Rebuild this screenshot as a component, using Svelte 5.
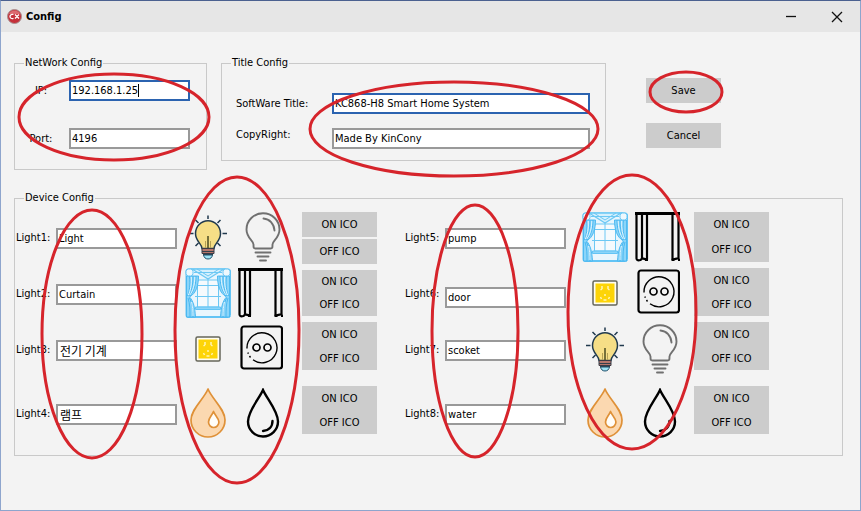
<script>
  let network = $state({ ip: '192.168.1.25', port: '4196' });
  let titles = $state({ software: 'KC868-H8 Smart Home System', copyright: 'Made By KinCony' });

  let banks = $state([
    {
      side: 'left',
      rows: [
        { id: 1, name: 'Light', icon: 'bulb' },
        { id: 2, name: 'Curtain', icon: 'curtain' },
        { id: 3, name: '전기 기계', icon: 'socket', korean: true },
        { id: 4, name: '램프', icon: 'drop', korean: true }
      ]
    },
    {
      side: 'right',
      rows: [
        { id: 5, name: 'pump', icon: 'curtain' },
        { id: 6, name: 'door', icon: 'socket' },
        { id: 7, name: 'scoket', icon: 'bulb' },
        { id: 8, name: 'water', icon: 'drop' }
      ]
    }
  ]);

  // Red marker rings: centre x, centre y, radius x, radius y
  const rings = [
    [114, 117, 95, 43],
    [454, 129, 144, 47],
    [686, 92, 36, 20],
    [92, 334, 50, 124],
    [237, 330, 62, 153],
    [475, 331, 43, 126],
    [632, 312, 64, 137]
  ];
</script>

{#snippet iconOn(kind)}
  <svg class="on" viewBox="0 0 46 50" width="46" height="50" aria-hidden="true">
    {#if kind === 'bulb'}
      <g fill="none" stroke="#20394d" stroke-width="1.5">
        <path d="M23 3.5v3.5M4 21.5h4.5M37.5 21.5H42M10.5 8l3 3M35.5 8l-3 3M10.5 34l3-3M35.5 34l-3-3" />
        <path fill="#f6de86" d="M17 36.5c0-5-6.5-7-6.500-15a12.500 12.800 0 0 1 25 0c0 8-6.500 10-6.500 15z" />
        <path stroke="#4b4b20" d="M23 24v12" />
        <path stroke="#b5a055" stroke-width="1" d="M20.500 29v7M25.500 29v7" />
      </g>
      <path fill="#b5766c" stroke="#3b3b45" d="M17 36.500h12v5H17z" />
      <path stroke="#33404c" stroke-width="1" d="M17 39.500h12M18 42.500h10" />
      <path fill="#9fe3f5" stroke="#20506b" d="M18.500 43h9c-.5 2.500-2 4-4.500 4s-4-1.500-4.500-4z" />
    {:else if kind === 'curtain'}
      <rect x="1" y="1" width="44.500" height="48.500" rx="2" fill="#e9f6fd" stroke="#62c4f5" />
      <g fill="none" stroke="#6cc8f4" stroke-width="1">
        <path fill="#f5fafd" d="M12.500 12h21v27h-21z" />
        <path d="M23 11v28M10 17.500h26M10 28.500h26" />
        <path fill="#d5f0fd" stroke-width="1.300" d="M7 1h32L23 11z" />
        <path d="M9 4.500h28M12 1l11 7 11-7" />
      </g>
      <g fill="#8bd5f9" stroke="#43b4ef" stroke-width=".9">
        <path d="M1.500 8h12c0 9-2 17-9 21 4 4 5.500 11 6 20h-9z" />
        <path d="M44.500 8h-12c0 9 2 17 9 21-4 4-5.500 11-6 20h9z" />
        <path fill="none" d="M4.500 8c1 9 0 15-2 20M8 8c0 10-2 16-4 20M11 8c0 8-2 15-6 20M3 30c2 6 2 12 2 19M4.500 30c3 6 3.500 12 3.500 19M41.500 8c-1 9 0 15 2 20M38 8c0 10 2 16 4 20M35 8c0 8 2 15 6 20M43 30c-2 6-2 12-2 19M41.500 30c-3 6-3.500 12-3.500 19" />
        <path stroke="#eaf8ff" fill="none" d="M6.300 9c.5 8-1 14-3 18M9.800 9c0 8-2 14-5 18M39.700 9c-.5 8 1 14 3 18M36.200 9c0 8 2 14 5 18M6.500 34c1 4 1.500 9 1.500 14M39.500 34c-1 4-1.500 9-1.500 14" />
      </g>
      <g fill="#eef8fd" stroke="#62c4f5">
        <rect x="1" y="1" width="7" height="7" rx="2.500" />
        <rect x="38" y="1" width="7" height="7" rx="2.500" />
        <path d="M10.500 39h25v2.500h-25z" fill="#8bd5f9" />
        <path d="M11 48.500h24" />
      </g>
    {:else if kind === 'socket'}
      <rect x="11" y="13" width="24" height="24" rx="1.500" fill="#fffdf0" stroke="#66665a" stroke-width="1.500" />
      <rect x="13.500" y="15.500" width="19" height="19" fill="#fdd407" />
      <path fill="none" stroke="#fff3b5" stroke-width="1.500" d="M20 18v3M26 18v3M18.500 22l1.500-1M27.500 22l-1.500-1M23 26v2M18.500 29l1 2M27.500 29l-1 2M21.500 32h3" />
    {:else}
      <g stroke="#df9138" stroke-width="1.700" stroke-linejoin="round">
        <path fill="#fbd8b0" d="M23 1C19 11 6 21 6 32a17 17 0 0 0 34 0C40 21 27 11 23 1z" />
        <path fill="#fffdf8" d="M28.500 23.500c-1.500 4-5 6.500-5 10.500a5.200 5.500 0 0 0 10.400 0c0-4-3.900-6.500-5.400-10.500z" />
      </g>
    {/if}
  </svg>
{/snippet}

{#snippet iconOff(kind)}
  <svg class="off" viewBox="0 0 45 50" width="45" height="50" aria-hidden="true">
    {#if kind === 'bulb'}
      <g fill="none" stroke="#707070" stroke-width="1.900" stroke-linecap="round">
        <path d="M17.500 36.500c-2 0-2-1-2-4 0-4-7-6.500-7-15a16.500 16.200 0 0 1 33 0c0 8.500-7 11-7 15 0 3 0 4-2 4z" />
        <path d="M25.500 6.500c6 .5 10.500 5 11 12" />
        <path d="M17.500 40.500h15M19.500 44.500h11M22 48.500h6" />
      </g>
    {:else if kind === 'curtain'}
      <g fill="none" stroke="#000" stroke-width="2.200">
        <path d="M0 1.500h45" stroke-width="2.800" />
        <path d="M1.500 1v45.500c0 2 2 2 4 1.500l1.500-1.500V1M7 46.500c1.500-.5 3.500 1.500 5 .5V1M37.500 1v46c2 1 3.500-1 6-.5V1" />
        <path d="M10 47.800h3M36.500 47.800h3M43 47.800h2" />
      </g>
    {:else if kind === 'socket'}
      <rect x="3.500" y="2.500" width="40.500" height="42" rx="2.500" fill="none" stroke="#000" stroke-width="2.200" />
      <g fill="none" stroke="#000" stroke-width="1.400">
        <path d="M9 24.500a15 15 0 1 1 6 11.300M12.500 33.500l-1-1.500M10.300 29.800l-.4-1.300" />
        <circle cx="18.500" cy="23.500" r="3.500" stroke-width="1.700" />
        <circle cx="29.500" cy="23.500" r="3.500" stroke-width="1.700" />
      </g>
    {:else}
      <g fill="none" stroke="#000" stroke-width="2.400" stroke-linecap="round">
        <path d="M25 2C21 11 10 23 10 33.500a15 15 0 0 0 30 0C40 23 29 11 25 2z" />
        <path d="M34.500 33c0 6-4 9.500-9.500 10" />
      </g>
    {/if}
  </svg>
{/snippet}

<div class="window">
  <header>
    <svg width="15" height="15" viewBox="0 0 15 15" aria-hidden="true">
      <circle cx="7.500" cy="7.500" r="7" fill="#c5303a" stroke="#a89090" />
      <path d="M2 5a6 6 0 0 1 11 0z" fill="#dc6a70" />
      <path d="M6.500 5.500C4.500 4.800 3 6 3 7.500s1.500 2.500 3.500 1.800M8 5.500l4 4M12 5.500l-4 4" fill="none" stroke="#fff" stroke-width="1.300" />
    </svg>
    <h1>Config</h1>
    <button class="chrome" aria-label="Minimize">
      <svg width="12" height="12" viewBox="0 0 12 12"><path d="M1 5.500h10" /></svg>
    </button>
    <button class="chrome" aria-label="Close">
      <svg width="12" height="12" viewBox="0 0 12 12"><path d="M1 1l10 10M11 1L1 11" /></svg>
    </button>
  </header>

  <main>
    <div class="top">
      <fieldset>
        <legend>NetWork Config</legend>
        <div class="form network">
          <label for="ip">IP:</label>
          <div class="field">
            <input id="ip" class="active" bind:value={network.ip} />
            <span class="caret"></span>
          </div>
          <label for="port">Port:</label>
          <input id="port" bind:value={network.port} />
        </div>
      </fieldset>

      <fieldset>
        <legend>Title Config</legend>
        <div class="form titles">
          <label for="software">SoftWare Title:</label>
          <input id="software" class="active" bind:value={titles.software} />
          <label for="copyright" class="raised">CopyRight:</label>
          <input id="copyright" bind:value={titles.copyright} />
        </div>
      </fieldset>

      <div class="actions">
        <button>Save</button>
        <button>Cancel</button>
      </div>
    </div>

    <fieldset class="devices">
      <legend>Device Config</legend>
      {#each banks as bank}
        <div class="bank {bank.side}">
          {#each bank.rows as row}
            <div class="row">
              <label for="light{row.id}">Light{row.id}:</label>
              <input id="light{row.id}" class:korean={row.korean} bind:value={row.name} />
              {@render iconOn(row.icon)}
              {@render iconOff(row.icon)}
              <div class="pair">
                <button>ON ICO</button>
                <button>OFF ICO</button>
              </div>
            </div>
          {/each}
        </div>
      {/each}
    </fieldset>
  </main>

  <svg class="rings" aria-hidden="true">
    {#each rings as [cx, cy, rx, ry]}
      <ellipse {cx} {cy} {rx} {ry} />
    {/each}
  </svg>
</div>

<style>
  .window {
    position: relative;
    box-sizing: border-box;
    min-height: 100vh;
    border: 1px solid #8ea5cd;
    border-top-color: #4b6190;
    background: #f3f3f3;
    color: #000;
    font: 11px/14px 'DejaVu Sans Condensed', 'Noto Sans CJK KR', sans-serif;
  }

  header {
    display: flex;
    align-items: center;
    height: 31px;
    padding-left: 6px;
    background: #e6e6e6;
  }

  h1 {
    flex: 1;
    margin: 0 0 0 4px;
    font-size: 11px;
    line-height: 14px;
  }

  .chrome {
    display: grid;
    place-items: center;
    width: 46px;
    height: 31px;
    background: none;
  }

  .chrome path {
    fill: none;
    stroke: #111;
    stroke-width: 1.3;
  }

  main {
    padding: 24px 17px 24px 13px;
  }

  fieldset {
    box-sizing: border-box;
    min-width: 0;
    margin: 0;
    padding: 0;
    border: 1px solid #c9c9c9;
  }

  legend {
    margin-left: 9px;
    padding: 0 1px;
  }

  button {
    padding: 0;
    border: 0;
    background: #ccc;
    color: inherit;
    font: inherit;
  }

  input {
    box-sizing: border-box;
    width: 100%;
    min-width: 0;
    height: 21px;
    padding: 0 1px;
    border: 2px solid #999;
    border-radius: 0;
    outline: 0;
    background: #fff;
    color: inherit;
    font: inherit;
  }

  input.active {
    border-color: #2b63b0;
  }

  input.korean {
    padding: 0 2px 1px;
    font: 12px/14px 'Noto Sans CJK KR', sans-serif;
  }

  .top {
    display: grid;
    grid-template-columns: 193fr 385fr 223fr;
    align-items: start;
    column-gap: 14px;
    height: 135px;
  }

  .form {
    display: grid;
    align-items: center;
  }

  .network {
    grid-template-columns: 28px 1fr;
    gap: 27px 14px;
    padding: 10px 16px 20px 12px;
  }

  .network label {
    text-align: center;
  }

  .field {
    position: relative;
  }

  .caret {
    position: absolute;
    left: 69px;
    top: 4px;
    width: 1px;
    height: 13px;
    background: #000;
  }

  .titles {
    grid-template-columns: 82px 1fr;
    gap: 14px;
    padding: 23px 15px 11px 14px;
  }

  .raised {
    align-self: start;
  }

  .actions {
    display: flex;
    flex-direction: column;
    gap: 20px;
    padding: 22px 0 0 26px;
  }

  .actions button,
  .pair {
    width: 75px;
  }

  .actions button {
    height: 25px;
  }

  .devices {
    display: grid;
    grid-template-columns: 389fr 438fr;
    width: 100%;
    padding-bottom: 17px;
  }

  .bank {
    display: grid;
    grid-template-rows: 56px 54px 64px 52px;
    padding-top: 7px;
  }

  .row {
    display: flex;
    align-items: flex-start;
  }

  .row label {
    flex: 0 0 41px;
    padding: 19px 0 0 1px;
    box-sizing: border-box;
  }

  .row input {
    flex: 0 0 121px;
    margin-top: 16px;
  }

  .row:nth-child(n + 3) label {
    padding-top: 21px;
  }

  .row:nth-child(n + 3) input {
    margin-top: 18px;
  }

  .row:nth-child(n + 3) svg {
    margin-top: 2px;
  }

  .right .row:nth-child(2) input {
    margin-top: 19px;
  }

  .row .on {
    flex: none;
    margin-left: 8px;
  }

  .row .off {
    flex: none;
    margin: 0 19px 0 7px;
  }

  .right .row .on {
    margin-left: 16px;
  }

  .right .row .off {
    margin-right: 14px;
  }

  .pair {
    display: flex;
    flex-direction: column;
    height: 48px;
  }

  .pair button {
    flex: 1;
    padding-top: 1px;
  }

  .row:first-child .pair {
    height: 50px;
  }

  .left .row:first-child .pair {
    gap: 2px;
    height: 52px;
  }

  .left .row:nth-child(2) .pair {
    height: 46px;
    margin-top: 2px;
  }

  .rings {
    position: absolute;
    top: -1px;
    left: -1px;
    width: 100%;
    height: 100%;
    overflow: visible;
    pointer-events: none;
  }

  .rings ellipse {
    fill: none;
    stroke: #d6242b;
    stroke-width: 3;
  }
</style>
